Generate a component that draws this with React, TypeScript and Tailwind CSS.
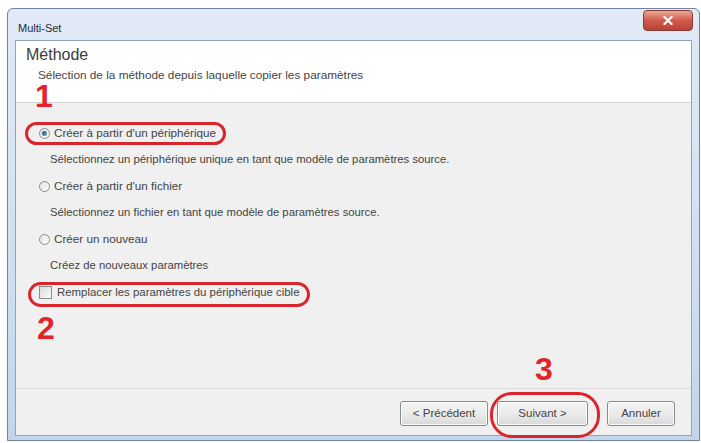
import React from 'react';

type Choice = { label: string; hint: string; checked?: boolean };

const choices: Choice[] = [
  {
    label: "Créer à partir d'un périphérique",
    hint: 'Sélectionnez un périphérique unique en tant que modèle de paramètres source.',
    checked: true,
  },
  {
    label: "Créer à partir d'un fichier",
    hint: 'Sélectionnez un fichier en tant que modèle de paramètres source.',
  },
  { label: 'Créer un nouveau', hint: 'Créez de nouveaux paramètres' },
];

function Radio({ checked }: { checked?: boolean }) {
  return (
    <span className="w-[11px] h-[11px] rounded-full border border-[#8c8c8c] bg-gradient-to-br from-[#e2e2e2] to-[#ffffff] flex items-center justify-center shrink-0">
      {checked && <span className="w-[5px] h-[5px] rounded-full bg-gradient-to-br from-[#2b4f6e] to-[#6fa4c6]" />}
    </span>
  );
}

function WinButton({ children, w }: { children: React.ReactNode; w: string }) {
  return (
    <button
      className={`${w} h-[25px] rounded-[3px] border border-[#8a8a8a] bg-gradient-to-b from-[#f4f4f4] via-[#ebebeb] to-[#d9d9d9] text-[11.5px] text-[#444] shadow-[inset_0_0_0_1px_#fbfbfb]`}
    >
      {children}
    </button>
  );
}

export default function App() {
  return (
    <div className="relative w-[701px] h-[443px] bg-white overflow-hidden font-['Liberation_Sans',Arial,sans-serif] text-[#444]">
      {/* window frame */}
      <div className="ml-[7px] mt-[8px] w-[693px] h-[433px] rounded-t-[6px] border border-[#71849d] bg-gradient-to-b from-[#e1eaf6] via-[#d2e1f1] to-[#c2d5ec] flex flex-col px-[7px] pb-[4px]">
        <div className="h-[31px] flex justify-between items-start">
          <span className="text-[11px] text-[#1e2a3a] pl-[3px] pt-[11px]">Multi-Set</span>
          <div className="mt-[1px] -mr-[1px] w-[50px] h-[21px] rounded-[4px] border border-[#8a3a34] bg-gradient-to-b from-[#e8a89a] via-[#cf5a4b] to-[#bb4234] flex items-center justify-center">
            <svg width="10" height="9" viewBox="0 0 10 9">
              <path d="M1.5 1 L8.5 8 M8.5 1 L1.5 8" stroke="#ffffff" strokeWidth="2.2" strokeLinecap="square" />
            </svg>
          </div>
        </div>

        {/* client area */}
        <div className="flex-1 border border-[#8fa3bd] bg-[#f0f0f0] flex flex-col">
          <div className="h-[62px] bg-white border-b border-[#d3d3d3] pl-[10px] pt-[4px]">
            <div className="text-[16px] leading-[20px] text-[#3c3c3c]">Méthode</div>
            <div className="text-[11.8px] leading-[16px] pl-[12px] pt-[2px]">
              Sélection de la méthode depuis laquelle copier les paramètres
            </div>
          </div>

          <div className="flex-1 pl-[23px] pt-[17px] text-[11.7px]">
            {choices.map((c) => (
              <div key={c.label}>
                <div className="h-[26.5px] flex items-center gap-[4px]">
                  <Radio checked={c.checked} />
                  <span>{c.label}</span>
                </div>
                <div className="h-[26.5px] flex items-center pl-[11px] text-[11.3px]">{c.hint}</div>
              </div>
            ))}
            <div className="h-[26.5px] flex items-center gap-[5px] text-[11.4px]">
              <span className="w-[13px] h-[13px] border border-[#8c8c8c] bg-gradient-to-br from-[#dcdcdc] to-[#fafafa] shrink-0" />
              <span>Remplacer les paramètres du périphérique cible</span>
            </div>
          </div>

          <div className="h-[47px] border-t border-[#dcdcdc] flex justify-end items-start pt-[12px] pr-[16px]">
            <WinButton w="w-[88px]">&lt; Précédent</WinButton>
            <div className="w-[9px]" />
            <WinButton w="w-[91px]">Suivant &gt;</WinButton>
            <div className="w-[19px]" />
            <WinButton w="w-[68px]">Annuler</WinButton>
          </div>
        </div>
      </div>

      {/* step callouts */}
      <div className="absolute left-[25px] top-[122px] w-[201px] h-[23px] rounded-full border-[3px] border-[#d9252c]" />
      <div className="absolute left-[28px] top-[282px] w-[282px] h-[25px] rounded-full border-[3px] border-[#d9252c]" />
      <div className="absolute left-[490px] top-[392px] w-[110px] h-[46px] rounded-[22px] border-[3px] border-[#d9252c]" />
      <span className="absolute left-[35px] top-[80px] text-[32px] leading-none font-bold text-[#e4232b]">1</span>
      <span className="absolute left-[37px] top-[312px] text-[32px] leading-none font-bold text-[#e4232b]">2</span>
      <span className="absolute left-[535px] top-[353px] text-[32px] leading-none font-bold text-[#e4232b]">3</span>
    </div>
  );
}
